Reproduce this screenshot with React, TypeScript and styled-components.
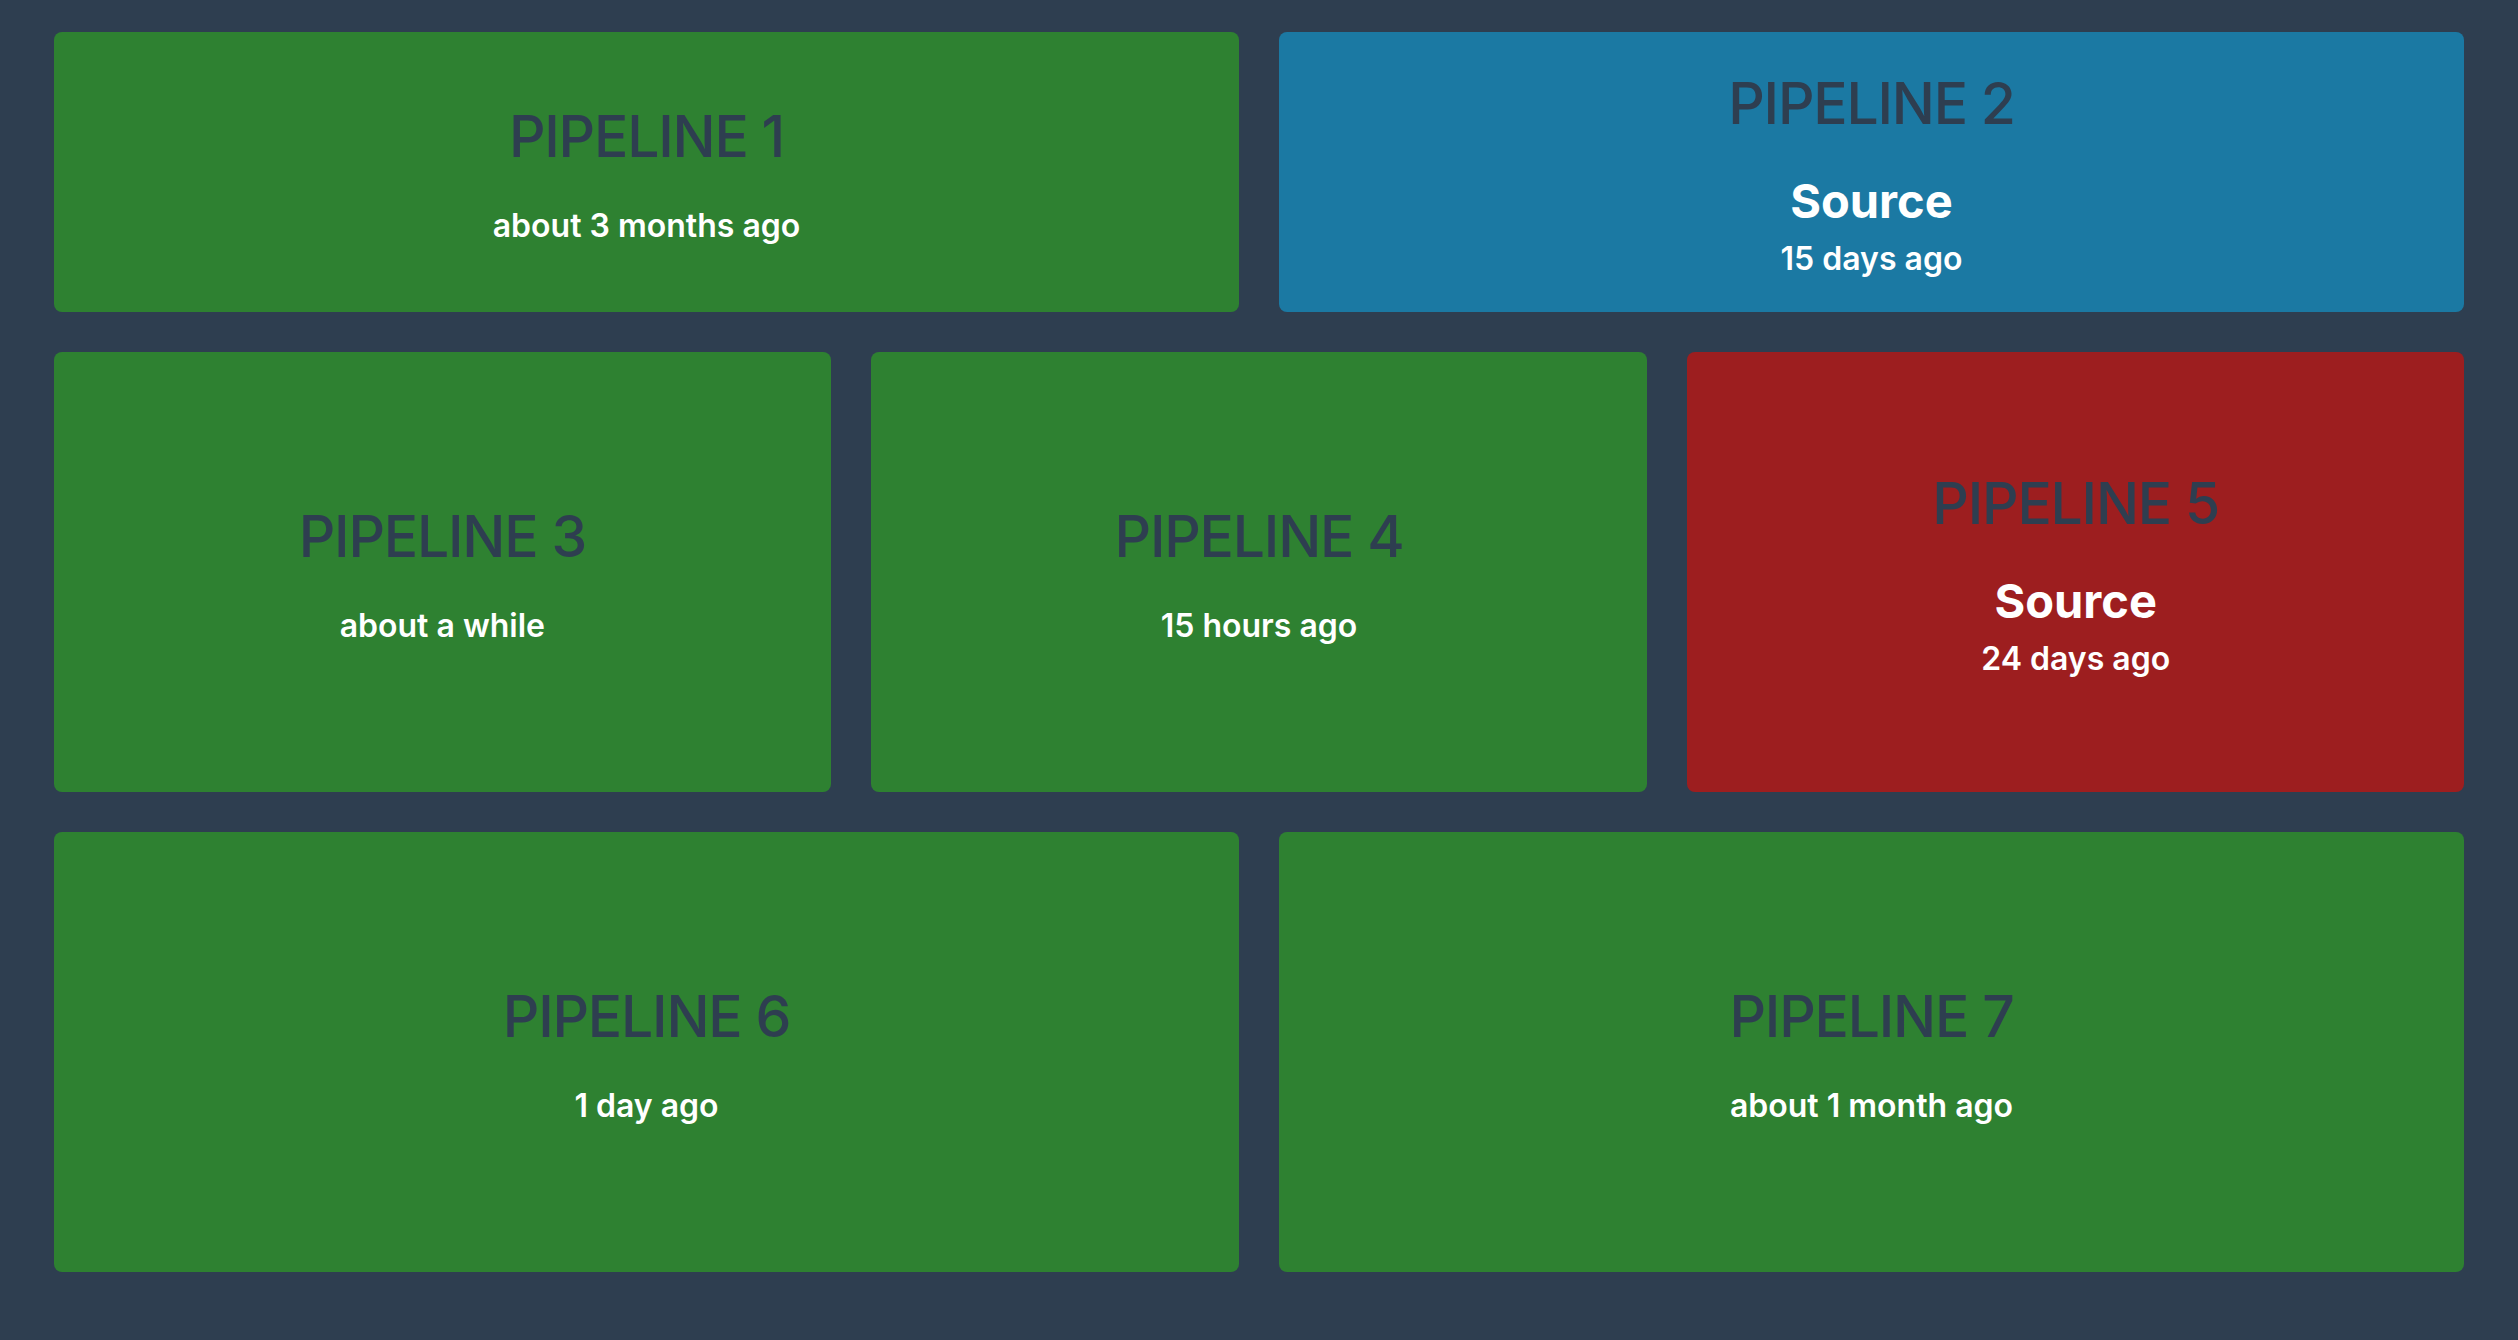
import React from "react";
import styled, { createGlobalStyle } from "styled-components";

const Global = createGlobalStyle`
  html, body {
    margin: 0;
    padding: 0;
    background: #2e3e50;
  }
  body {
    font-family: Inter, "Noto Sans", "Liberation Sans", sans-serif;
  }
`;

const Page = styled.div`
  box-sizing: border-box;
  width: 2518px;
  min-height: 1340px;
  padding: 32px 54px 68px;
  display: flex;
  flex-direction: column;
  gap: 40px;
  background: #2e3e50;
`;

const Row = styled.div<{ $h: number }>`
  display: flex;
  gap: 40px;
  height: ${(p) => p.$h}px;
`;

const colors = {
  success: "#2e8131",
  running: "#1b79a3",
  failed: "#9d1e1f",
};

type Status = keyof typeof colors;

const Card = styled.div<{ $status: Status }>`
  box-sizing: border-box;
  flex: 1 1 0;
  min-width: 0;
  padding-top: 6px;
  border-radius: 8px;
  background: ${(p) => colors[p.$status]};
  display: flex;
  flex-direction: column;
  align-items: center;
  justify-content: center;
  text-align: center;
`;

const Title = styled.h1`
  margin: 0 0 45px;
  font-size: 57px;
  line-height: 1;
  font-weight: 450;
  letter-spacing: -1.2px;
  color: #2e3e50;
`;

const Stage = styled.div`
  margin: 0 0 19px;
  font-size: 47px;
  line-height: 1;
  font-weight: 700;
  color: #ffffff;
`;

const Time = styled.div`
  font-size: 32px;
  line-height: 1;
  font-weight: 600;
  color: #ffffff;
`;

type P = { name: string; status: Status; stage?: string; time: string };

const rows: { h: number; items: P[] }[] = [
  {
    h: 280,
    items: [
      { name: "PIPELINE 1", status: "success", time: "about 3 months ago" },
      { name: "PIPELINE 2", status: "running", stage: "Source", time: "15 days ago" },
    ],
  },
  {
    h: 440,
    items: [
      { name: "PIPELINE 3", status: "success", time: "about a while" },
      { name: "PIPELINE 4", status: "success", time: "15 hours ago" },
      { name: "PIPELINE 5", status: "failed", stage: "Source", time: "24 days ago" },
    ],
  },
  {
    h: 440,
    items: [
      { name: "PIPELINE 6", status: "success", time: "1 day ago" },
      { name: "PIPELINE 7", status: "success", time: "about 1 month ago" },
    ],
  },
];

export default function App() {
  return (
    <>
      <Global />
      <Page>
        {rows.map((r, i) => (
          <Row key={i} $h={r.h}>
            {r.items.map((p) => (
              <Card key={p.name} $status={p.status}>
                <Title>{p.name}</Title>
                {p.stage && <Stage>{p.stage}</Stage>}
                <Time>{p.time}</Time>
              </Card>
            ))}
          </Row>
        ))}
      </Page>
    </>
  );
}
